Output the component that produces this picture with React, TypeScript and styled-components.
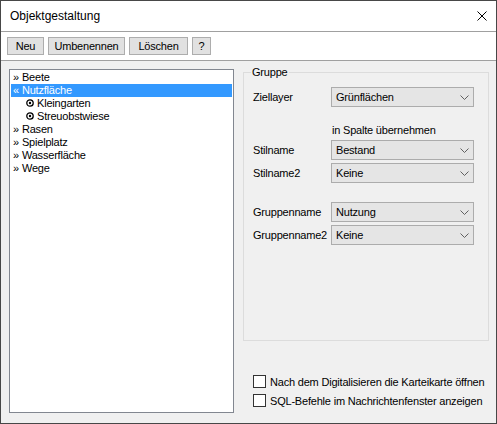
import React from 'react';
import styled, { createGlobalStyle } from 'styled-components';

const GlobalStyle = createGlobalStyle`
  html, body {
    margin: 0;
    padding: 0;
    background: #ffffff;
  }
  body {
    font-family: 'Liberation Sans', Arial, sans-serif;
    font-size: 11px;
    color: #000;
  }
`;

const Window = styled.div`
  width: 497px;
  height: 424px;
  box-sizing: border-box;
  border: 1px solid #474747;
  display: flex;
  flex-direction: column;
  background: #f0f0f0;
`;

const TitleBar = styled.div`
  height: 30px;
  flex: none;
  display: flex;
  align-items: center;
  justify-content: space-between;
  padding: 0 9px 0 9px;
  background: #ffffff;
  border-bottom: 1px solid #a0a0a0;
`;

const Title = styled.span`
  font-size: 12px;
  padding-bottom: 1px;
`;

const CloseButton = styled.button`
  width: 10px;
  height: 10px;
  padding: 0;
  margin-right: 0;
  border: none;
  background: none;
  display: flex;
  cursor: pointer;
`;

const Toolbar = styled.div`
  height: 29px;
  flex: none;
  box-sizing: border-box;
  display: flex;
  align-items: flex-start;
  gap: 4px;
  padding: 5px 6px 0;
  background: #ffffff;
  border-bottom: 1px solid #a0a0a0;
`;

interface ButtonProps {
  w: number;
}
const ToolButton = styled.button<ButtonProps>`
  width: ${({ w }) => w}px;
  height: 18px;
  padding: 0;
  box-sizing: border-box;
  border: 1px solid #adadad;
  background: #e1e1e1;
  font: inherit;
  font-size: 11px;
  letter-spacing: -0.2px;
  line-height: 16px;
  color: #000;
  cursor: pointer;
`;

const Body = styled.div`
  flex: 1;
  display: flex;
  gap: 9px;
  padding: 8px 7px 10px 8px;
  min-height: 0;
`;

const TreeList = styled.ul`
  width: 225px;
  flex: none;
  box-sizing: border-box;
  margin: 0;
  padding: 1px;
  list-style: none;
  background: #ffffff;
  border: 1px solid #828790;
`;

interface RowProps {
  level: number;
  selected?: boolean;
}
const TreeRow = styled.li<RowProps>`
  height: 13px;
  display: flex;
  align-items: center;
  gap: 3px;
  padding-left: ${({ level }) => (level ? 15 : 2)}px;
  letter-spacing: -0.2px;
  line-height: 13px;
  white-space: nowrap;
  background: ${({ selected }) => (selected ? '#3399ff' : 'transparent')};
  color: ${({ selected }) => (selected ? '#ffffff' : '#000000')};
`;

const Bullet = styled.svg`
  flex: none;
  margin-top: -2px;
`;

const RightColumn = styled.div`
  flex: 1;
  display: flex;
  flex-direction: column;
`;

const GroupBox = styled.div`
  position: relative;
  margin-top: 3px;
  height: 269px;
  box-sizing: border-box;
  border: 1px solid #dcdcdc;
  padding: 14px 14px 0 9px;
  display: flex;
  flex-direction: column;
`;

const Legend = styled.span`
  position: absolute;
  top: -7px;
  left: 7px;
  padding: 0 1px;
  background: #f0f0f0;
  line-height: 13px;
  letter-spacing: -0.2px;
`;

interface FieldProps {
  space?: number;
}
const FieldRow = styled.div<FieldProps>`
  display: grid;
  grid-template-columns: 78px 143px;
  align-items: center;
  margin-top: ${({ space }) => space ?? 0}px;
`;

const Label = styled.span`
  letter-spacing: -0.2px;
  white-space: nowrap;
`;

const Hint = styled.span`
  grid-column: 2;
  padding-left: 1px;
  line-height: 13px;
  letter-spacing: -0.2px;
`;

const Combo = styled.div`
  height: 20px;
  box-sizing: border-box;
  display: flex;
  align-items: center;
  justify-content: space-between;
  padding: 0 4px 0 4px;
  background: #e5e5e5;
  border: 1px solid #acacac;
  letter-spacing: -0.2px;
`;

const CheckList = styled.div`
  margin-top: auto;
  margin-bottom: 3px;
  padding-left: 10px;
  display: flex;
  flex-direction: column;
`;

const CheckRow = styled.label`
  height: 19px;
  display: flex;
  align-items: center;
  gap: 4px;
  letter-spacing: -0.2px;
  white-space: nowrap;
`;

const Box = styled.span`
  width: 13px;
  height: 13px;
  box-sizing: border-box;
  flex: none;
  border: 1px solid #333333;
  background: #ffffff;
`;

const Chevron = () => (
  <svg width="9" height="5" viewBox="0 0 9 5">
    <polyline points="0.5,0.5 4.5,4.5 8.5,0.5" fill="none" stroke="#606060" strokeWidth="1" />
  </svg>
);

const tree = [
  { label: 'Beete', level: 0 },
  { label: 'Nutzfläche', level: 0, selected: true },
  { label: 'Kleingarten', level: 1 },
  { label: 'Streuobstwiese', level: 1 },
  { label: 'Rasen', level: 0 },
  { label: 'Spielplatz', level: 0 },
  { label: 'Wasserfläche', level: 0 },
  { label: 'Wege', level: 0 },
];

const Field = ({ label, value, space }: { label: string; value: string; space?: number }) => (
  <FieldRow space={space}>
    <Label>{label}</Label>
    <Combo>
      <span>{value}</span>
      <Chevron />
    </Combo>
  </FieldRow>
);

const App = () => (
  <>
    <GlobalStyle />
    <Window>
      <TitleBar>
        <Title>Objektgestaltung</Title>
        <CloseButton aria-label="Schließen">
          <svg width="10" height="10" viewBox="0 0 10 10">
            <path d="M0.5 0.5 L9.5 9.5 M9.5 0.5 L0.5 9.5" stroke="#000" strokeWidth="1" />
          </svg>
        </CloseButton>
      </TitleBar>
      <Toolbar>
        <ToolButton w={37}>Neu</ToolButton>
        <ToolButton w={77}>Umbenennen</ToolButton>
        <ToolButton w={59}>Löschen</ToolButton>
        <ToolButton w={19}>?</ToolButton>
      </Toolbar>
      <Body>
        <TreeList>
          {tree.map((item) => (
            <TreeRow key={item.label} level={item.level} selected={item.selected}>
              {item.level ? (
                <Bullet width="8" height="8" viewBox="0 0 8 8">
                  <circle cx="4" cy="4" r="3.2" fill="none" stroke="#000" strokeWidth="1.3" />
                  <circle cx="4" cy="4" r="1.2" fill="#000" />
                </Bullet>
              ) : (
                <span>{item.selected ? '«' : '»'}</span>
              )}
              <span>{item.label}</span>
            </TreeRow>
          ))}
        </TreeList>
        <RightColumn>
          <GroupBox>
            <Legend>Gruppe</Legend>
            <Field label="Ziellayer" value="Grünflächen" />
            <FieldRow space={17}>
              <Hint>in Spalte übernehmen</Hint>
            </FieldRow>
            <Field label="Stilname" value="Bestand" space={3} />
            <Field label="Stilname2" value="Keine" space={3} />
            <Field label="Gruppenname" value="Nutzung" space={19} />
            <Field label="Gruppenname2" value="Keine" space={3} />
          </GroupBox>
          <CheckList>
            <CheckRow>
              <Box />
              Nach dem Digitalisieren die Karteikarte öffnen
            </CheckRow>
            <CheckRow>
              <Box />
              SQL-Befehle im Nachrichtenfenster anzeigen
            </CheckRow>
          </CheckList>
        </RightColumn>
      </Body>
    </Window>
  </>
);

export default App;
